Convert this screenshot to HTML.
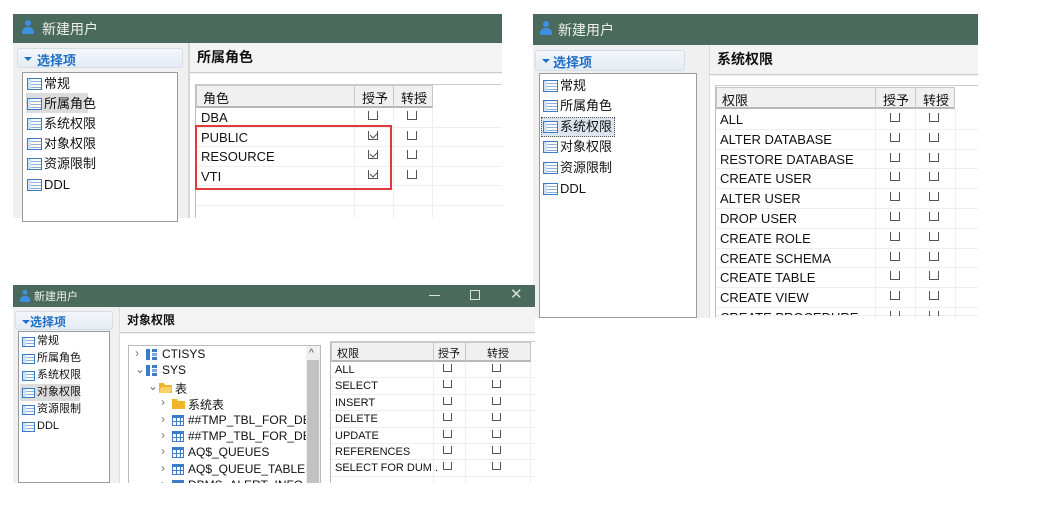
<!DOCTYPE html>
<html><head><meta charset="utf-8"><style>
*,*:before,*:after{margin:0;padding:0;box-sizing:border-box}
body{width:1044px;height:506px;background:#fff;position:relative;overflow:hidden;font-family:"Liberation Sans","Noto Sans CJK SC",sans-serif;color:#111;font-size:13px}
.a{position:absolute}
.tb{background:#496a5c;color:#f0f0f0}
.usr{position:absolute;width:12px;height:14px}
.usr:before{content:"";position:absolute;left:3px;top:0;width:6px;height:6px;border-radius:50%;background:#3d8fe0}
.usr:after{content:"";position:absolute;left:0;top:7px;width:12px;height:7px;border-radius:5px 5px 1px 1px;background:#3d8fe0}
.sel{background:linear-gradient(#f4f7fb,#e4ebf3);border:1px solid #d5dde6;border-radius:3px;color:#1f6fc5;font-weight:bold}
.sel:before{content:"";position:absolute;left:6px;top:8px;border:4px solid transparent;border-top:4px solid #1f6fc5}
.lst{border:1px solid #9a9a9a;background:#fff}
.it{position:absolute;left:4px;height:19px;line-height:19px;padding-left:17px;white-space:nowrap}
.it:before{content:"";position:absolute;left:0;top:4px;width:15px;height:12px;border:1px solid #3a7bc8;background:linear-gradient(90deg,#cfe0f3 0 3px,transparent 3px),repeating-linear-gradient(#fff 0 2px,#8fb0d8 2px 3px)}
.s .it{height:17px;line-height:17px;font-size:11px;padding-left:15px}
.s .it:before{width:13px;height:10px;top:4px}
.gr{background:#f0f0f0}
.hd{background:#f0f0f0;border:1px solid #c8c8c8;border-bottom:2px solid #b8b8b8}
.cb{position:absolute;width:10px;height:9px;border:1px solid #555;border-top:none}
.row{position:absolute;border-bottom:1px solid #eee}
</style></head><body>

<!-- Panel 1 -->
<div class="a tb" style="left:13px;top:14px;width:489px;height:29px"></div>
<div class="usr" style="left:22px;top:20px"></div>
<div class="a" style="left:42px;top:19px;color:#f0f0f0;font-size:14px">新建用户</div>
<div class="a gr" style="left:13px;top:43px;width:489px;height:175px"></div>
<div class="a sel" style="left:17px;top:48px;width:166px;height:20px"><span class="a" style="left:19px;top:1px;font-size:13px">选择项</span></div>
<div class="a lst" style="left:22px;top:72px;width:156px;height:150px"></div>
<div class="a" style="left:26px;top:93px;width:62px;height:20px;background:#dcdcdc"></div>
<div class="it" style="left:27px;top:74px">常规</div>
<div class="it" style="left:27px;top:94px">所属角色</div>
<div class="it" style="left:27px;top:114px">系统权限</div>
<div class="it" style="left:27px;top:134px">对象权限</div>
<div class="it" style="left:27px;top:154px">资源限制</div>
<div class="it" style="left:27px;top:175px">DDL</div>
<div class="a" style="left:188px;top:43px;width:2px;height:175px;background:#d6d6d6"></div>
<div class="a" style="left:190px;top:43px;width:312px;height:30px;background:#f3f3f3;border-bottom:1px solid #ccc"></div>
<div class="a" style="left:197px;top:47px;font-weight:bold;font-size:14px">所属角色</div>
<div class="a" style="left:190px;top:74px;width:312px;height:144px;background:#fff"></div>
<div class="a" style="left:195px;top:84px;width:307px;height:134px;border-left:1px solid #bbb;border-top:1px solid #ccc;background:#fff"></div>
<div class="a hd" style="left:196px;top:85px;width:159px;height:23px"><span class="a" style="left:6px;top:2px">角色</span></div>
<div class="a hd" style="left:354px;top:85px;width:40px;height:23px"><span class="a" style="left:7px;top:2px">授予</span></div>
<div class="a hd" style="left:393px;top:85px;width:40px;height:23px"><span class="a" style="left:7px;top:2px">转授</span></div>
<div class="a" style="left:354px;top:108px;width:1px;height:110px;background:#eee"></div>
<div class="a" style="left:393px;top:108px;width:1px;height:110px;background:#eee"></div>
<div class="a" style="left:432px;top:108px;width:1px;height:110px;background:#eee"></div>
<div class="row" style="left:196px;top:108px;width:306px;height:19.5px"><span class="a" style="left:5px;top:2px">DBA</span></div>
<div class="row" style="left:196px;top:127.5px;width:306px;height:19.5px"><span class="a" style="left:5px;top:2px">PUBLIC</span></div>
<div class="row" style="left:196px;top:147px;width:306px;height:19.5px"><span class="a" style="left:5px;top:2px">RESOURCE</span></div>
<div class="row" style="left:196px;top:166.5px;width:306px;height:19.5px"><span class="a" style="left:5px;top:2px">VTI</span></div>
<div class="row" style="left:196px;top:186px;width:306px;height:19.5px"></div>
<div class="cb" style="left:368px;top:111px"></div><div class="cb" style="left:407px;top:111px"></div>
<div class="cb" style="left:368px;top:131px"></div><div class="cb" style="left:407px;top:131px"></div>
<div class="cb" style="left:368px;top:150px"></div><div class="cb" style="left:407px;top:150px"></div>
<div class="cb" style="left:368px;top:170px"></div><div class="cb" style="left:407px;top:170px"></div>
<svg class="a" style="left:368px;top:129px" width="12" height="60"><g fill="none" stroke="#555" stroke-width="1"><path d="M2 6l3 3 5-5"/><path d="M2 25l3 3 5-5"/><path d="M2 45l3 3 5-5"/></g></svg>
<div class="a" style="left:195px;top:125px;width:197px;height:65px;border:2px solid #e0393b"></div>

<!-- Panel 2 -->
<div class="a tb" style="left:533px;top:14px;width:445px;height:31px"></div>
<div class="usr" style="left:540px;top:21px"></div>
<div class="a" style="left:558px;top:20px;color:#f0f0f0;font-size:14px">新建用户</div>
<div class="a gr" style="left:533px;top:45px;width:445px;height:273px"></div>
<div class="a sel" style="left:535px;top:50px;width:150px;height:21px"><span class="a" style="left:17px;top:1px;font-size:13px">选择项</span></div>
<div class="a lst" style="left:539px;top:73px;width:158px;height:245px"></div>
<div class="a" style="left:541px;top:117px;width:74px;height:20px;border:1px dotted #555;background:#dde6f0"></div>
<div class="it" style="left:543px;top:76px">常规</div>
<div class="it" style="left:543px;top:96px">所属角色</div>
<div class="it" style="left:543px;top:117px">系统权限</div>
<div class="it" style="left:543px;top:137px">对象权限</div>
<div class="it" style="left:543px;top:158px">资源限制</div>
<div class="it" style="left:543px;top:179px">DDL</div>
<div class="a" style="left:709px;top:45px;width:269px;height:30px;background:#f3f3f3;border-bottom:1px solid #ccc;border-left:1px solid #ddd"></div>
<div class="a" style="left:717px;top:49px;font-weight:bold;font-size:14px">系统权限</div>
<div class="a" style="left:709px;top:76px;width:269px;height:242px;background:#fff;border-left:1px solid #ddd"></div>
<div class="a" style="left:715px;top:85px;width:263px;height:233px;border-left:1px solid #bbb;border-top:1px solid #ccc"></div>
<div class="a hd" style="left:716px;top:87px;width:160px;height:22px"><span class="a" style="left:5px;top:2px">权限</span></div>
<div class="a hd" style="left:875px;top:87px;width:41px;height:22px"><span class="a" style="left:7px;top:2px">授予</span></div>
<div class="a hd" style="left:915px;top:87px;width:40px;height:22px"><span class="a" style="left:7px;top:2px">转授</span></div>
<div class="a" style="left:875px;top:109px;width:1px;height:209px;background:#eee"></div>
<div class="a" style="left:915px;top:109px;width:1px;height:209px;background:#eee"></div>
<div class="a" style="left:955px;top:109px;width:1px;height:209px;background:#eee"></div>
<div id="p2"></div>

<!-- Panel 3 -->
<div class="a tb" style="left:13px;top:285px;width:522px;height:22px"></div>
<div class="usr" style="left:19px;top:289px;transform:scale(.85)"></div>
<div class="a" style="left:34px;top:288px;color:#f0f0f0;font-size:11px">新建用户</div>
<div class="a" style="left:429px;top:295px;width:11px;height:1px;background:#ddd"></div>
<div class="a" style="left:470px;top:290px;width:10px;height:10px;border:1px solid #ddd"></div>
<div class="a" style="left:510px;top:285px;color:#ddd;font-size:15px">✕</div>
<div class="a gr" style="left:13px;top:307px;width:522px;height:176px"></div>
<div class="a sel" style="left:15px;top:311px;width:98px;height:19px;font-size:11px"><span class="a" style="left:14px;top:1px;font-size:12px">选择项</span></div>
<div class="a lst" style="left:18px;top:331px;width:92px;height:152px"></div>
<div class="s">
<div class="a" style="left:20px;top:384px;width:60px;height:17px;background:#dcdcdc"></div>
<div class="it" style="left:22px;top:333px">常规</div>
<div class="it" style="left:22px;top:350px">所属角色</div>
<div class="it" style="left:22px;top:367px">系统权限</div>
<div class="it" style="left:22px;top:384px">对象权限</div>
<div class="it" style="left:22px;top:401px">资源限制</div>
<div class="it" style="left:22px;top:418px">DDL</div>
</div>
<div class="a" style="left:119px;top:307px;width:416px;height:26px;background:#f3f3f3;border-bottom:1px solid #ccc;border-left:1px solid #ddd"></div>
<div class="a" style="left:127px;top:311px;font-weight:bold;font-size:12px">对象权限</div>
<div class="a" style="left:119px;top:334px;width:416px;height:149px;background:#fff;border-left:1px solid #ddd"></div>
<div class="a" style="left:128px;top:345px;width:193px;height:140px;border:1px solid #bbb"></div>
<div class="a" style="left:306px;top:346px;width:14px;height:137px;background:#f0f0f0"></div>
<div class="a" style="left:307px;top:360px;width:12px;height:123px;background:#c2c2c2"></div>
<div class="a" style="left:309px;top:348px;font-size:10px;color:#444">^</div>
<div id="tree"></div>
<div class="a" style="left:330px;top:341px;width:205px;height:142px;border-left:1px solid #bbb;border-top:1px solid #ccc"></div>
<div class="a hd" style="left:331px;top:342px;width:103px;height:20px;font-size:11px"><span class="a" style="left:5px;top:2px">权限</span></div>
<div class="a hd" style="left:433px;top:342px;width:33px;height:20px;font-size:11px"><span class="a" style="left:4px;top:2px">授予</span></div>
<div class="a hd" style="left:465px;top:342px;width:66px;height:20px;font-size:11px"><span class="a" style="left:21px;top:2px">转授</span></div>
<div id="p3"></div>
<div class="a" style="left:0;top:483px;width:1044px;height:23px;background:#fff"></div>

<script>
var h='';
var L=["ALL","ALTER DATABASE","RESTORE DATABASE","CREATE USER","ALTER USER","DROP USER","CREATE ROLE","CREATE SCHEMA","CREATE TABLE","CREATE VIEW","CREATE PROCEDURE"];
L.forEach(function(t,i){var y=110+i*19.8;var ht=i==10?8:19.8;
h+='<div class="row" style="left:716px;top:'+y+'px;width:262px;height:'+ht+'px;overflow:hidden"><span class="a" style="left:4px;top:2px;font-size:13px">'+t+'</span></div>';
h+='<div class="cb" style="left:890px;top:'+(y+3)+'px;'+(i==10?'height:5px;border-bottom:none':'')+'"></div><div class="cb" style="left:929px;top:'+(y+3)+'px;'+(i==10?'height:5px;border-bottom:none':'')+'"></div>';});
document.getElementById('p2').innerHTML=h;
h='';
var M=["ALL","SELECT","INSERT","DELETE","UPDATE","REFERENCES","SELECT FOR DUM.."];
M.forEach(function(t,i){var y=362+i*16.4;
h+='<div class="row" style="left:331px;top:'+y+'px;width:204px;height:16.4px;font-size:11px"><span class="a" style="left:4px;top:2px">'+t+'</span></div>';
h+='<div class="cb" style="left:443px;top:'+(y+2)+'px;width:9px;height:8px"></div><div class="cb" style="left:492px;top:'+(y+2)+'px;width:9px;height:8px"></div>';});
h+='<div class="a" style="left:433px;top:362px;width:1px;height:121px;background:#eee"></div><div class="a" style="left:465px;top:362px;width:1px;height:121px;background:#eee"></div><div class="a" style="left:530px;top:362px;width:1px;height:121px;background:#eee"></div>';
document.getElementById('p3').innerHTML=h;
h='';
var T=[[135,"›","db","CTISYS"],[135,"⌄","db","SYS"],[148,"⌄","fo","表"],[161,"›","fc","系统表"],[161,"›","tb","##TMP_TBL_FOR_DBMS"],[161,"›","tb","##TMP_TBL_FOR_DBMS"],[161,"›","tb","AQ$_QUEUES"],[161,"›","tb","AQ$_QUEUE_TABLES"],[161,"›","tb","DBMS_ALERT_INFO"]];
T.forEach(function(r,i){var y=346+i*16.4;var x=r[0];
var ic='';
if(r[2]=='db')ic='<svg class="a" style="left:'+(x+11)+'px;top:'+(y+3)+'px" width="12" height="11"><rect x="0" y="0" width="4" height="11" fill="#3d7cc9"/><rect x="6" y="0" width="5" height="3" fill="#3d7cc9"/><rect x="6" y="4" width="5" height="3" fill="#7aaee0"/><rect x="6" y="8" width="5" height="3" fill="#3d7cc9"/></svg>';
else if(r[2]=='fo'||r[2]=='fc')ic='<svg class="a" style="left:'+(x+11)+'px;top:'+(y+3)+'px" width="13" height="11"><path d="M0 1h5l1 2h7v8H0z" fill="#f0b429"/>'+(r[2]=='fo'?'<path d="M2 5h11l-2 6H0z" fill="#fbd26a"/>':'')+'</svg>';
else ic='<svg class="a" style="left:'+(x+11)+'px;top:'+(y+3)+'px" width="12" height="11"><rect x="0" y="0" width="12" height="11" fill="#3d7cc9"/><g fill="#fff"><rect x="1" y="3" width="3" height="3"/><rect x="5" y="3" width="3" height="3"/><rect x="9" y="3" width="2" height="3"/><rect x="1" y="7" width="3" height="3"/><rect x="5" y="7" width="3" height="3"/><rect x="9" y="7" width="2" height="3"/></g></svg>';
h+='<div class="a" style="left:'+x+'px;top:'+y+'px;color:#777;font-size:12px">'+r[1]+'</div>'+ic+'<div class="a" style="left:'+(x+27)+'px;top:'+(y+1)+'px;width:'+(306-x-27)+'px;overflow:hidden;white-space:nowrap;height:16px;font-size:12px">'+r[3]+'</div>';});
document.getElementById('tree').innerHTML=h;
</script>
</body></html>
